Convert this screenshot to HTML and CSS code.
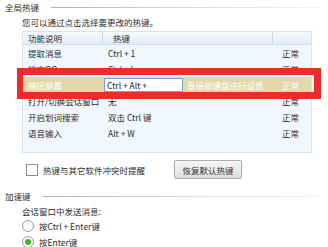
FILE: index.html
```html
<!DOCTYPE html>
<html lang="zh-CN">
<head>
    <meta charset="UTF-8">
    <title>热键设置</title>
    <link rel="stylesheet" href="styles.css">
</head>
<body>
    <div class="panel">
        <div class="group-title"><span>全局热键</span><i class="rule"></i></div>
        <p class="hint">您可以通过点击选择要更改的热键。</p>

        <div class="hotkeys">
            <div class="row head">
                <span class="c1">功能说明</span>
                <span class="c2">热键</span>
                <span class="c3"></span>
            </div>
            <div class="row">
                <span class="c1">提取消息</span>
                <span class="c2">Ctrl + 1</span>
                <span class="c3">正常</span>
            </div>
            <div class="row">
                <span class="c1">锁定QQ</span>
                <span class="c2">Ctrl + L</span>
                <span class="c3">正常</span>
            </div>
            <div class="row selected">
                <span class="c1">捕捉屏幕</span>
                <span class="c2"><input type="text" class="key-input" value="Ctrl + Alt + "><em>直接按键盘进行设置</em></span>
                <span class="c3">正常</span>
            </div>
            <div class="row">
                <span class="c1">打开/切换会话窗口</span>
                <span class="c2">无</span>
                <span class="c3">正常</span>
            </div>
            <div class="row">
                <span class="c1">开启划词搜索</span>
                <span class="c2">双击 Ctrl 键</span>
                <span class="c3">正常</span>
            </div>
            <div class="row">
                <span class="c1">语音输入</span>
                <span class="c2">Alt + W</span>
                <span class="c3">正常</span>
            </div>
            <div class="highlight"></div>
        </div>

        <div class="options">
            <label class="check"><span class="box"></span>热键与其它软件冲突时提醒</label>
            <button class="reset">恢复默认热键</button>
        </div>

        <div class="group-title second"><span>加速键</span><i class="rule"></i></div>
        <p class="hint">会话窗口中发送消息:</p>
        <label class="radio"><span class="dot"></span>按Ctrl + Enter键</label>
        <label class="radio"><span class="dot on"></span>按Enter键</label>
    </div>
</body>
</html>
```

FILE: styles.css
```css
body {
    margin: 0;
    background: #fff;
    font-family: "Noto Sans CJK SC", "Liberation Sans", sans-serif;
    font-size: 8.5px;
    color: #2b2b2b;
    overflow: hidden;
}

.panel {
    padding: 1px 7px 0 5px;
}

.group-title {
    display: flex;
    align-items: center;
    gap: 12px;
    height: 12px;
}

.group-title.second {
    margin-top: 11px;
}

.rule {
    flex: 1;
    height: 1px;
    background: linear-gradient(to right, #9fb6cc, #d9e2ea 60%, #f4f4f4);
}

.hint {
    margin: 2px 0 0 17px;
    height: 14px;
    line-height: 14px;
}

.hotkeys {
    position: relative;
    margin: 2px 0 0 17px;
    width: 290px;
    height: 122px;
    background: #f1f7fe;
    border: 1px solid #d8e4f0;
    box-sizing: border-box;
}

.row {
    display: grid;
    grid-template-columns: 79px 170px 40px;
    height: 16px;
    line-height: 16px;
}

.row.head {
    height: 12px;
    line-height: 12px;
    background: linear-gradient(#f7fafd, #e2ecf7);
    border-bottom: 1px solid #d3dfec;
}

.head .c2,
.head .c3 {
    border-left: 1px solid #c9d7e6;
}

.head .c2 {
    padding-left: 10px;
}

.c1 {
    padding-left: 5px;
    white-space: nowrap;
    overflow: hidden;
}

.c2 {
    padding-left: 6px;
    white-space: nowrap;
}

.c3 {
    padding-left: 10px;
}

.row.selected {
    background: #e4d8ab;
    color: #fff;
}

.selected .c2 {
    padding-left: 2px;
    display: flex;
    align-items: center;
    gap: 4px;
}

.key-input {
    width: 79px;
    height: 14px;
    box-sizing: border-box;
    margin: 0;
    padding: 0 2px;
    border: 1px solid #7aa2cf;
    font: inherit;
    color: #222;
    background: #fff;
}

.selected em {
    font-style: normal;
}

.highlight {
    position: absolute;
    left: -6px;
    top: 36px;
    width: 304px;
    height: 31px;
    box-sizing: border-box;
    border: 7px solid #ee2b2b;
    border-left-width: 6px;
}

.options {
    display: flex;
    align-items: center;
    margin: 7px 0 0 21px;
    height: 19px;
}

.check,
.radio {
    display: flex;
    align-items: center;
    gap: 5px;
}

.box {
    width: 10px;
    height: 10px;
    border: 1px solid #8e8f8f;
    background: #fff;
}

.reset {
    margin-left: 29px;
    width: 68px;
    height: 19px;
    padding: 0;
    font: inherit;
    color: #333;
    background: linear-gradient(#f6f6f6, #dedede);
    border: 1px solid #adadad;
    border-radius: 2px;
}

.radio {
    margin-left: 17px;
    height: 16px;
}

.dot {
    width: 10px;
    height: 10px;
    border: 1px solid #a0a0a0;
    border-radius: 50%;
    background: #fafafa;
    display: flex;
    align-items: center;
    justify-content: center;
}

.dot.on::after {
    content: "";
    width: 6px;
    height: 6px;
    border-radius: 50%;
    background: #3fb13a;
}
```
